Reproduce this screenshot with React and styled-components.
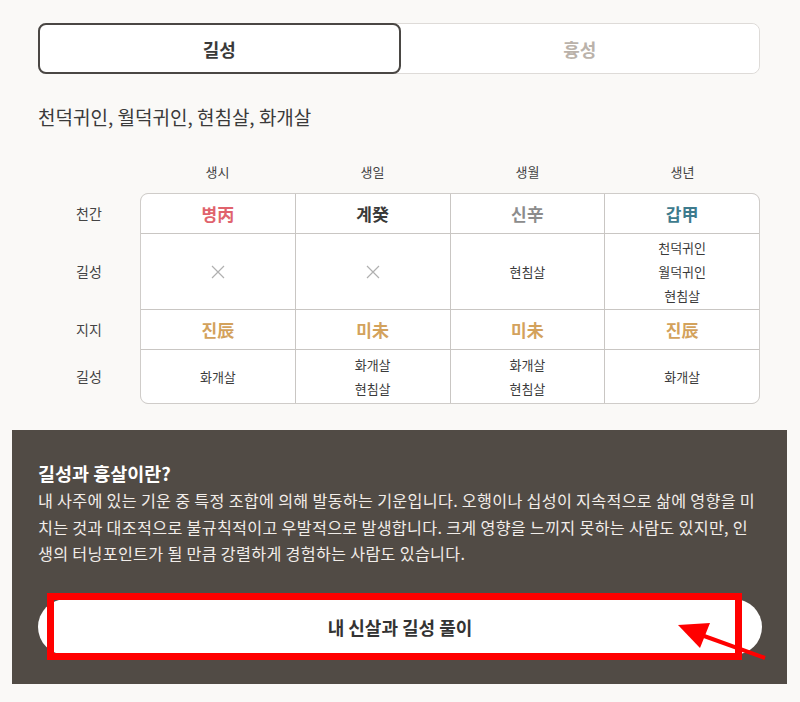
import React, { useState } from "react"
import styled, { createGlobalStyle } from 'styled-components'

const GlobalStyle = createGlobalStyle`
    body {
        margin: 0;
        background: #faf9f7;
        font-family: "Noto Sans CJK KR", "Noto Sans", sans-serif;
        color: #333;
    }
    * { box-sizing: border-box; }
`;

const pillars = [
    { stem: { text: '병丙', color: '#e0636d' }, stemLucky: [], branch: { text: '진辰', color: '#d3a25c' }, branchLucky: ['화개살'] },
    { stem: { text: '계癸', color: '#393939' }, stemLucky: [], branch: { text: '미未', color: '#d3a25c' }, branchLucky: ['화개살', '현침살'] },
    { stem: { text: '신辛', color: '#8c8c8c' }, stemLucky: ['현침살'], branch: { text: '미未', color: '#d3a25c' }, branchLucky: ['화개살', '현침살'] },
    { stem: { text: '갑甲', color: '#3e7b8d' }, stemLucky: ['천덕귀인', '월덕귀인', '현침살'], branch: { text: '진辰', color: '#d3a25c' }, branchLucky: ['화개살'] },
];

const headers = ['생시', '생일', '생월', '생년'];
const labels = [
    { text: '천간', h: 40 },
    { text: '길성', h: 76 },
    { text: '지지', h: 40 },
    { text: '길성', h: 54 },
];

// lines broken where the original copy breaks
const infoLines = [
    '내 사주에 있는 기운 중 특정 조합에 의해 발동하는 기운입니다. 오행이나 십성이 지속적으로 삶에 영향을 미',
    '치는 것과 대조적으로 불규칙적이고 우발적으로 발생합니다. 크게 영향을 느끼지 못하는 사람도 있지만, 인',
    '생의 터닝포인트가 될 만큼 강렬하게 경험하는 사람도 있습니다.',
];

function Cross() {
    return (
        <svg width="14" height="14" viewBox="0 0 14 14">
            <path d="M1 1 L13 13 M13 1 L1 13" stroke="#b0b0b0" strokeWidth="1.2" fill="none" />
        </svg>
    )
}

function LuckyCell({ items }) {
    return (
        <Cell>
            {items.length === 0 ? <Cross /> : items.map((s, i) => <Small key={i}>{s}</Small>)}
        </Cell>
    )
}

function App() {
    const [tab, setTab] = useState('good');

    return (
        <Page>
            <GlobalStyle />
            <Content>
                <Tabs>
                    <Tab $active={tab === 'good'} onClick={() => setTab('good')}>길성</Tab>
                    <Tab $active={tab === 'bad'} onClick={() => setTab('bad')}>흉성</Tab>
                </Tabs>

                <Summary>천덕귀인, 월덕귀인, 현침살, 화개살</Summary>

                <HeaderRow>
                    {headers.map((h) => <HeaderCell key={h}>{h}</HeaderCell>)}
                </HeaderRow>

                <ChartBody>
                    <Labels>
                        {labels.map((l, i) => <Label key={i} $h={l.h}>{l.text}</Label>)}
                    </Labels>
                    <Table>
                        {pillars.map((p, i) => <Cell key={'s' + i}><Stem $color={p.stem.color}>{p.stem.text}</Stem></Cell>)}
                        {pillars.map((p, i) => <LuckyCell key={'sl' + i} items={p.stemLucky} />)}
                        {pillars.map((p, i) => <Cell key={'b' + i}><Stem $color={p.branch.color}>{p.branch.text}</Stem></Cell>)}
                        {pillars.map((p, i) => <LuckyCell key={'bl' + i} items={p.branchLucky} />)}
                    </Table>
                </ChartBody>
            </Content>

            <InfoPanel>
                <InfoTitle>길성과 흉살이란?</InfoTitle>
                <InfoText>
                    {infoLines.map((line, i) => (
                        <React.Fragment key={i}>{line}{i < infoLines.length - 1 && <br />}</React.Fragment>
                    ))}
                </InfoText>
                <ButtonWrap>
                    <PillButton>내 신살과 길성 풀이</PillButton>
                    <Highlight />
                    <Arrow viewBox="0 0 760 80" width="760" height="80">
                        <line x1="727" y1="59" x2="655" y2="33" stroke="#ff0000" strokeWidth="4" />
                        <polygon points="640,26 672,24 662,49" fill="#ff0000" />
                    </Arrow>
                </ButtonWrap>
            </InfoPanel>
        </Page>
    )
}

const Page = styled.div`
    width: 800px;
    padding: 23px 0 19px;
`;

const Content = styled.div`
    padding: 0 40px 0 38px;
`;

const Tabs = styled.div`
    display: flex;
    height: 51px;
    background: #fff;
    border: 1px solid #dedbd8;
    border-radius: 8px;
`;

const Tab = styled.button`
    flex: 1;
    margin: ${p => p.$active ? '-1px 0 -1px -1px' : '0'};
    border: ${p => p.$active ? '2px solid #4a4744' : 'none'};
    border-radius: 8px;
    background: #fff;
    font-family: inherit;
    font-size: 18px;
    font-weight: 700;
    color: ${p => p.$active ? '#3a3a3a' : '#bab2aa'};
    cursor: pointer;
`;

const Summary = styled.p`
    margin: 31px 0 0;
    font-size: 19px;
    line-height: 24px;
    color: #3a3a3a;
`;

const HeaderRow = styled.div`
    display: flex;
    margin-top: 33px;
    padding-left: 102px;
`;

const HeaderCell = styled.div`
    flex: 1;
    text-align: center;
    font-size: 13px;
    line-height: 20px;
    color: #444;
`;

const ChartBody = styled.div`
    display: flex;
    margin-top: 11px;
`;

const Labels = styled.div`
    width: 102px;
    display: flex;
    flex-direction: column;
`;

const Label = styled.div`
    height: ${p => p.$h}px;
    display: flex;
    align-items: center;
    justify-content: center;
    font-size: 14px;
    color: #444;
`;

const Table = styled.div`
    flex: 1;
    display: grid;
    grid-template-columns: repeat(4, 1fr);
    grid-template-rows: 39px 75px 39px 53px;
    gap: 1px;
    background: #c9c6c3;
    border: 1px solid #cfccc9;
    border-radius: 8px;
    overflow: hidden;
`;

const Cell = styled.div`
    background: #fff;
    display: flex;
    flex-direction: column;
    align-items: center;
    justify-content: center;
`;

const Stem = styled.span`
    font-size: 17px;
    font-weight: 700;
    color: ${p => p.$color};
`;

const Small = styled.span`
    font-size: 13px;
    line-height: 24px;
    color: #3a3a3a;
`;

const InfoPanel = styled.section`
    margin: 26px 13px 0 12px;
    padding: 30px 25px 29px 26px;
    background: #514b45;
    color: #fff;
`;

const InfoTitle = styled.h3`
    margin: 0;
    font-size: 18.5px;
    line-height: 26px;
    font-weight: 700;
    color: #fff;
`;

const InfoText = styled.p`
    margin: 1px 0 0;
    font-size: 16.2px;
    letter-spacing: 0.3px;
    line-height: 26.5px;
    white-space: nowrap;
    color: #f1ede9;
`;

const ButtonWrap = styled.div`
    position: relative;
    margin-top: 32px;
`;

const PillButton = styled.button`
    display: block;
    width: 100%;
    height: 56px;
    border: none;
    border-radius: 28px;
    background: #fff;
    font-family: inherit;
    font-size: 18px;
    font-weight: 700;
    color: #333;
    cursor: pointer;
`;

const Highlight = styled.div`
    position: absolute;
    left: 9px;
    top: -6px;
    width: 695px;
    height: 67px;
    border: 7px solid #ff0000;
    pointer-events: none;
`;

const Arrow = styled.svg`
    position: absolute;
    left: 0;
    top: 0;
    overflow: visible;
    pointer-events: none;
`;

export default App
